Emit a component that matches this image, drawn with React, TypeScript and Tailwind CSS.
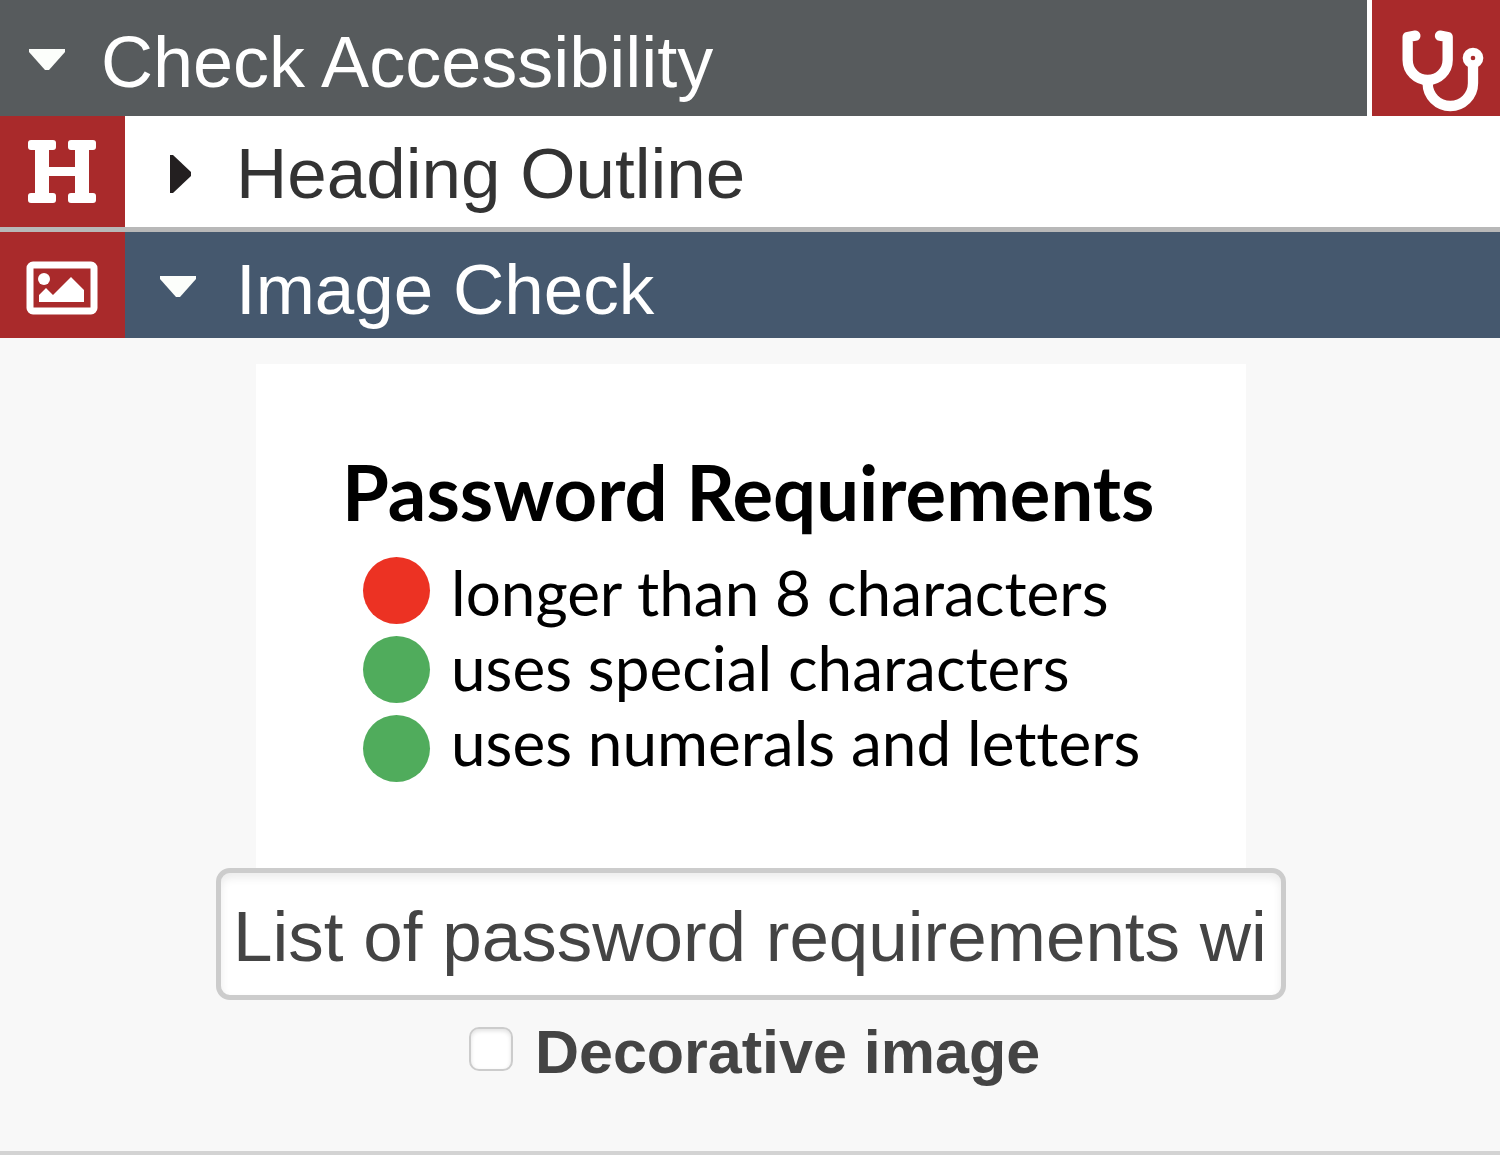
import { useState } from 'react'
import type { ReactNode } from 'react'

function ArrowDown() {
  return (
    <svg viewBox="0 0 38 24" className="h-6 w-[38px] shrink-0" aria-hidden="true">
      <path d="M1 1h36v3L21 22h-4L1 4z" fill="#fcfefb" />
    </svg>
  )
}

function ArrowRight() {
  return (
    <svg viewBox="0 0 38 40" className="h-10 w-[38px] shrink-0" aria-hidden="true">
      <path d="M11 1h3l18 17v4L14 39h-3z" fill="#231f20" />
    </svg>
  )
}

function HeadingIcon() {
  return (
    <svg viewBox="-2 0 72 64" className="h-16 w-[72px]" fill="#fff" aria-hidden="true">
      <rect x="0" y="0" width="28" height="10" rx="3" />
      <rect x="40" y="0" width="28" height="10" rx="3" />
      <rect x="0" y="53" width="28" height="10" rx="3" />
      <rect x="40" y="53" width="28" height="10" rx="3" />
      <rect x="7" y="5" width="14" height="53" />
      <rect x="47" y="5" width="14" height="53" />
      <rect x="19" y="27" width="29" height="9" />
    </svg>
  )
}

function ImageIcon() {
  return (
    <svg viewBox="0 0 72 54" className="mt-1.5 h-[54px] w-[72px]" fill="#fff" aria-hidden="true">
      <rect x="4" y="4" width="64" height="46" rx="3" fill="none" stroke="#fff" strokeWidth="7" />
      <circle cx="18" cy="18" r="6" />
      <path d="M13 41v-7l7-7 7 7 18-18 13 13v12z" />
    </svg>
  )
}

function StethoscopeIcon() {
  return (
    <svg viewBox="0 0 384 348" className="h-[116px] w-32" fill="none" stroke="#fff" aria-hidden="true">
      <path
        d="M130 107 107 111V180a60 60 0 0 0 120 0V111L204 107"
        strokeWidth="31"
        strokeLinecap="round"
        strokeLinejoin="round"
      />
      <path d="M167 238v12a68 68 0 0 0 136 0V190" strokeWidth="31" />
      <circle cx="303" cy="174" r="19" strokeWidth="24" />
    </svg>
  )
}

interface SectionRowProps {
  icon: ReactNode
  title: string
  open?: boolean
}

function SectionRow({ icon, title, open = false }: SectionRowProps) {
  return (
    <h3 className={open ? 'flex h-[106px] bg-[#45586e] text-white' : 'flex h-[111px] bg-white text-[#333]'}>
      <span className="flex w-[125px] shrink-0 items-center bg-[#a92a2b] pl-[26px]">{icon}</span>
      <button
        type="button"
        aria-expanded={open}
        className="flex flex-1 items-center gap-[39px] pt-1 pl-[34px] text-left text-[71px] leading-none"
      >
        {open ? <ArrowDown /> : <ArrowRight />}
        <span className={open ? 'pt-1' : ''}>{title}</span>
      </button>
    </h3>
  )
}

const requirements = [
  { text: 'longer than 8 characters', met: false },
  { text: 'uses special characters', met: true },
  { text: 'uses numerals and letters', met: true },
]

function ImagePreview() {
  return (
    <figure className="h-[504px] w-full max-w-[990px] bg-white pt-20 pl-[86px] font-['Lato',sans-serif] text-black [font-variant-ligatures:none]">
      <p className="text-[76px] leading-[96px] font-bold whitespace-nowrap">Password Requirements</p>
      <div className="flex gap-[21px] pt-[17px] pl-[21px]">
        <div className="flex flex-col gap-3">
          {requirements.map(({ text, met }) => (
            <span key={text} className={`size-[67px] rounded-full ${met ? 'bg-[#50ac5c]' : 'bg-[#ec3223]'}`} />
          ))}
        </div>
        <ul className="-mt-0.5 text-[62px] leading-[75px] whitespace-nowrap">
          {requirements.map(({ text }) => (
            <li key={text}>{text}</li>
          ))}
        </ul>
      </div>
    </figure>
  )
}

export default function App() {
  const [altText, setAltText] = useState('List of password requirements wi')
  const [decorative, setDecorative] = useState(false)

  return (
    <main className="border-b-4 border-[#d3d3d3] bg-[#f8f8f8] font-['Liberation_Sans',Arial,sans-serif]">
      <header className="flex h-[116px] gap-[5px] bg-white text-white">
        <h2 className="flex flex-1 bg-[#575b5d]">
          <button
            type="button"
            aria-expanded="true"
            className="flex flex-1 items-center gap-[35px] pt-1 pl-7 text-left text-[72px] leading-none"
          >
            <ArrowDown />
            <span className="pt-1">Check Accessibility</span>
          </button>
        </h2>
        <div className="w-32 shrink-0 bg-[#a92a2b]">
          <StethoscopeIcon />
        </div>
      </header>

      <SectionRow icon={<HeadingIcon />} title="Heading Outline" />
      <div className="h-[5px] bg-[#b8b8b8]" />
      <SectionRow icon={<ImageIcon />} title="Image Check" open />

      <section className="flex flex-col items-center pt-[26px] pb-[67px] pl-0.5">
        <ImagePreview />
        <input
          type="text"
          aria-label="Alternative text"
          value={altText}
          onChange={(e) => setAltText(e.target.value)}
          className="h-[132px] w-full max-w-[1070px] rounded-[14px] border-[5px] border-[#ccc] bg-white pt-1 pr-1 pl-3 text-[71px] text-[#444] shadow-[inset_0_5px_8px_rgba(0,0,0,0.08)] outline-none"
        />
        <label className="flex items-center gap-[22px] pt-5 pl-[7px] text-[61px] leading-[64px] font-bold text-[#444]">
          <input
            type="checkbox"
            checked={decorative}
            onChange={(e) => setDecorative(e.target.checked)}
            className="mb-1.5 size-11 appearance-none rounded-[10px] border-2 border-[#ccc] bg-white shadow-[inset_0_2px_4px_rgba(0,0,0,0.12)] checked:bg-[#45586e]"
          />
          Decorative image
        </label>
      </section>
    </main>
  )
}
